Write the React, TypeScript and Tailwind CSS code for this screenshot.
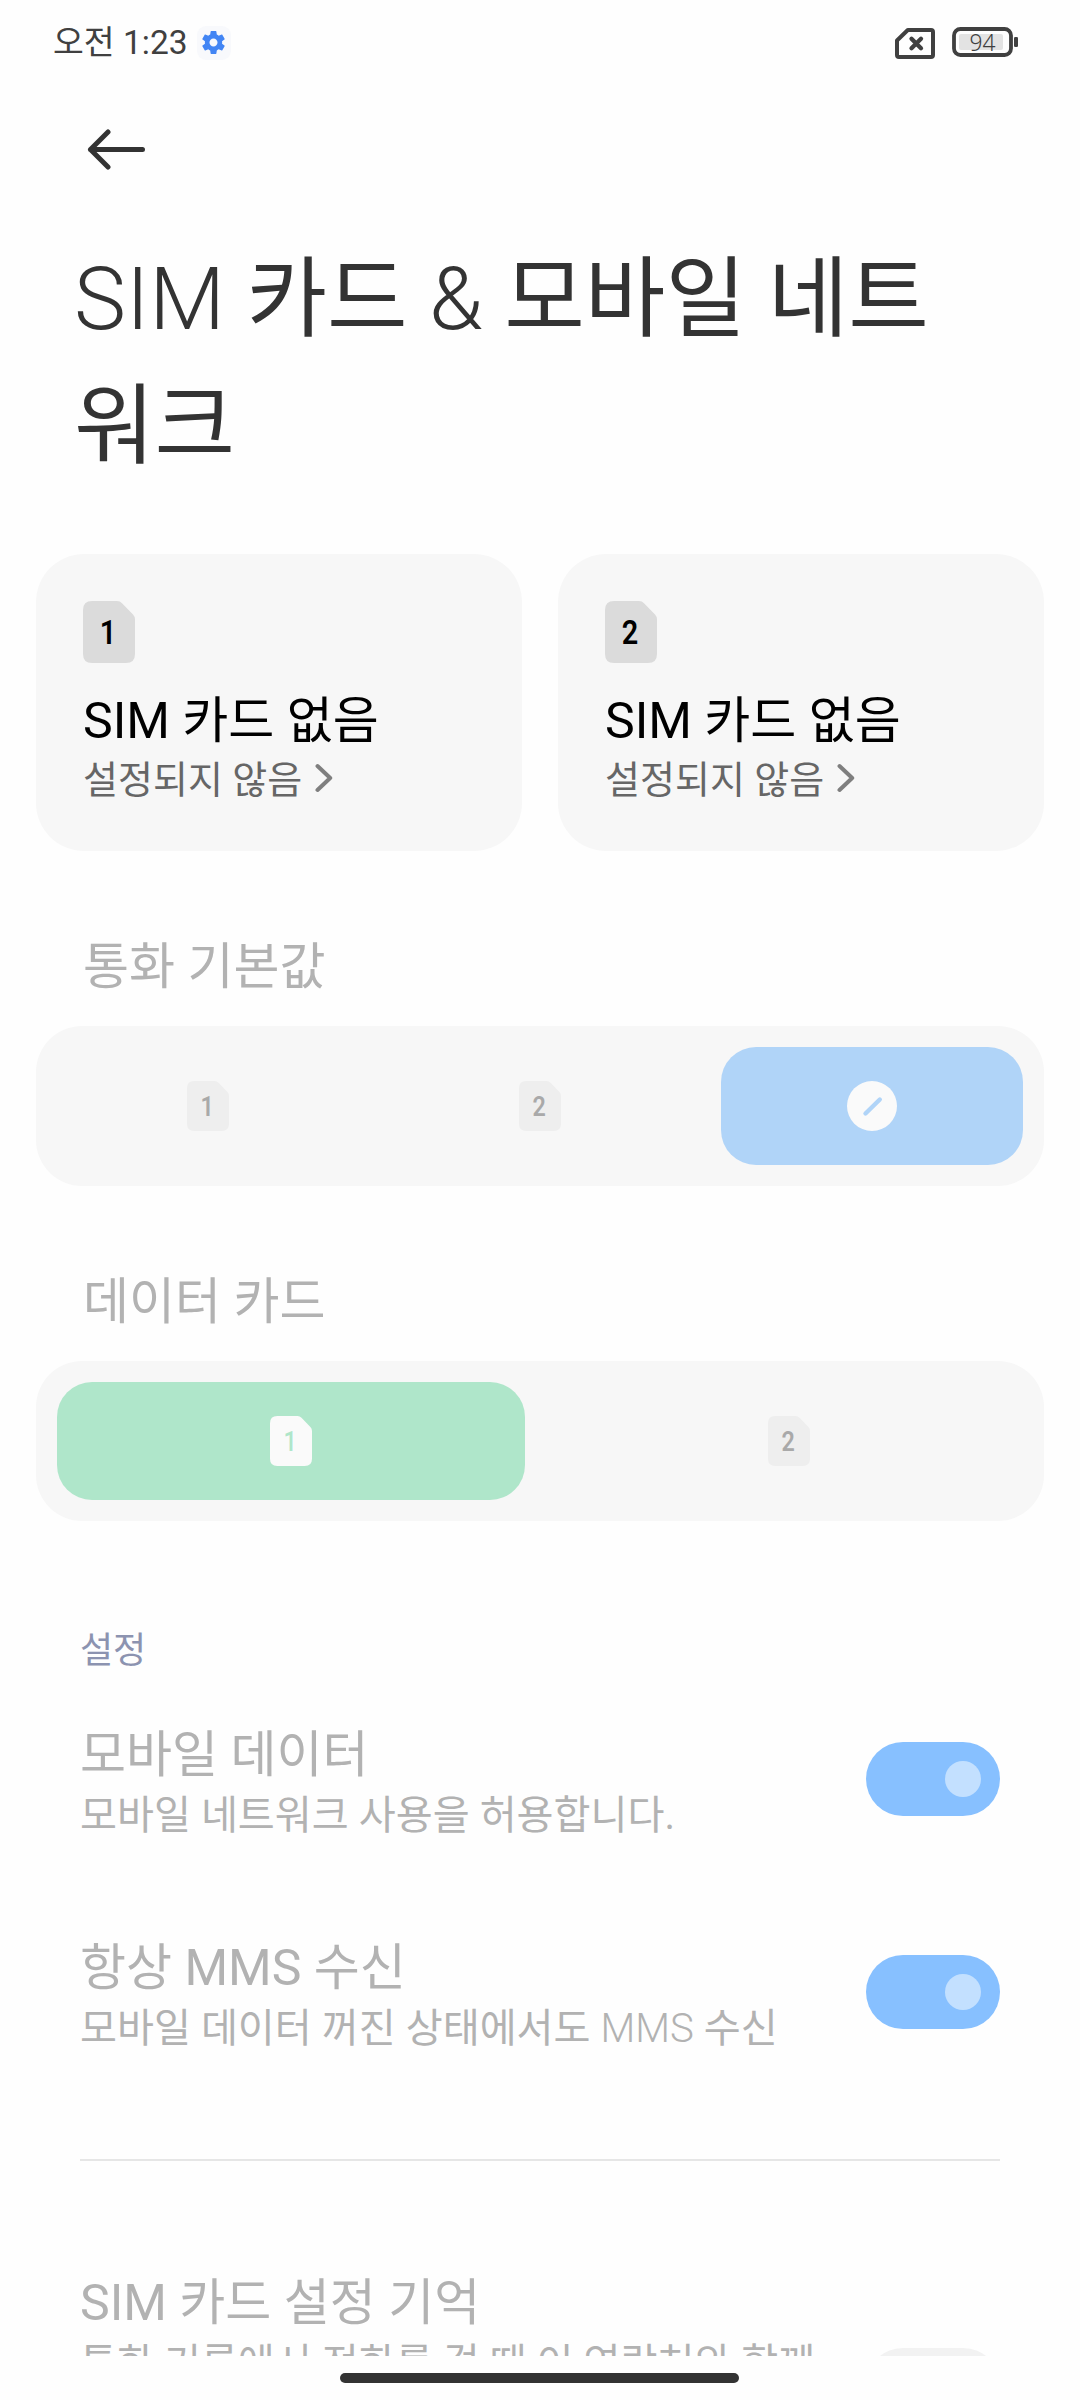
import type { ReactNode } from "react";

type SimIconProps = {
  slot: string;
  className: string;
  fill: string;
  ink: string;
  weight?: number;
};

function SimIcon({ slot, className, fill, ink, weight = 600 }: SimIconProps) {
  return (
    <svg viewBox="0 0 52 62" preserveAspectRatio="none" className={className}>
      <path
        d="M9 0H34Q37 0 39 2.200L50 13.500Q52 15.500 52 18.500V53Q52 62 43 62H9Q0 62 0 53V9Q0 0 9 0Z"
        fill={fill}
      />
      <text
        x="25"
        y="43"
        textAnchor="middle"
        fontSize="34"
        fontWeight={weight}
        fill={ink}
        textLength={16.5}
        lengthAdjust="spacingAndGlyphs"
      >
        {slot}
      </text>
    </svg>
  );
}

function SimCard({ slot }: { slot: string }) {
  return (
    <div className="h-[297px] flex-1 rounded-[48px] bg-[#f7f7f7] pt-[47px] pl-[47px]">
      <SimIcon slot={slot} className="h-[62px] w-[52px]" fill="#dbdbdb" ink="#000000" />
      <div className="mt-[25px] text-[50px] leading-[66px] text-black">SIM 카드 없음</div>
      <div className="flex items-start text-[38px] leading-[52px] text-[#666666]">
        <span>설정되지 않음</span>
        <svg viewBox="0 0 18 30" className="mt-[9px] ml-[13px] h-[30px] w-[18px]">
          <path
            d="M2.500 3L15.200 15L2.500 27"
            fill="none"
            stroke="#7f7f7f"
            strokeWidth="4"
            strokeLinecap="round"
            strokeLinejoin="round"
          />
        </svg>
      </div>
    </div>
  );
}

function SectionLabel({ children }: { children: ReactNode }) {
  return <div className="pl-[83px] text-[50px] leading-[66px] text-[#b2b2b2]">{children}</div>;
}

function Segmented({ children }: { children: ReactNode }) {
  return (
    <div className="mx-9 flex h-40 gap-[30px] rounded-[46px] bg-[#f7f7f7] p-[21px]">{children}</div>
  );
}

function Segment({ className = "", children }: { className?: string; children: ReactNode }) {
  return (
    <div className={`flex flex-1 items-center justify-center rounded-[35px] ${className}`}>
      {children}
    </div>
  );
}

function Toggle({ on, className }: { on: boolean; className: string }) {
  return (
    <div
      className={`flex h-[74px] w-[134px] shrink-0 items-center rounded-full px-[19px] ${
        on ? "justify-end bg-[#87c0ff]" : "justify-start bg-[#f2f2f2]"
      } ${className}`}
    >
      <div className={`size-9 rounded-full ${on ? "bg-[#c3e0ff]" : "bg-white"}`} />
    </div>
  );
}

type RowProps = { title: string; sub: ReactNode; on: boolean; toggleClass: string };

function SettingRow({ title, sub, on, toggleClass }: RowProps) {
  return (
    <div className="flex h-[120px] items-start justify-between text-[#b2b2b2]">
      <div className="whitespace-nowrap">
        <div className="text-[50px] leading-[66px]">{title}</div>
        <div className="text-[40.200px] leading-[56px]">{sub}</div>
      </div>
      <Toggle on={on} className={toggleClass} />
    </div>
  );
}

function StatusBar() {
  return (
    <header className="flex h-[86px] items-center pr-[61px] pl-[53px]">
      <span className="text-[33.500px] leading-[40px] text-[#404040]">오전 1:23</span>
      <span className="-mt-[1px] ml-[9px] flex size-[34px] items-center justify-center rounded-[9px] bg-[#f8f9fc]">
        <svg viewBox="2 2 20 20" className="size-[23px]">
          <path
            fill="#4285f4"
            d="M19.430 12.980c.04-.32.07-.64.07-.98s-.03-.66-.07-.98l2.110-1.650c.19-.15.24-.42.12-.64l-2-3.460c-.12-.22-.39-.3-.61-.22l-2.490 1c-.52-.4-1.080-.73-1.690-.98l-.38-2.650C14.460 2.180 14.250 2 14 2h-4c-.25 0-.46.18-.49.42l-.38 2.650c-.61.25-1.170.59-1.690.98l-2.490-1c-.23-.09-.49 0-.61.22l-2 3.460c-.13.22-.07.49.12.64l2.110 1.650c-.04.32-.07.65-.07.98s.03.66.07.98l-2.110 1.650c-.19.15-.24.42-.12.64l2 3.460c.12.22.39.3.61.22l2.490-1c.52.4 1.080.73 1.690.98l.38 2.650c.03.24.24.42.49.42h4c.25 0 .46-.18.49-.42l.38-2.650c.61-.25 1.170-.59 1.690-.98l2.490 1c.23.09.49 0 .61-.22l2-3.460c.12-.22.07-.49-.12-.64l-2.110-1.650zM12 15.500c-1.930 0-3.500-1.570-3.500-3.500s1.570-3.500 3.500-3.500 3.500 1.570 3.500 3.500-1.570 3.500-3.500 3.500z"
          />
        </svg>
      </span>
      <svg viewBox="0 0 40 31" className="ml-auto h-[31px] w-[40px]">
        <path
          d="M12.800 2H36Q38 2 38 4V27Q38 29 36 29H4Q2 29 2 27V12.500Z"
          fill="none"
          stroke="#404040"
          strokeWidth="4"
          strokeLinejoin="round"
        />
        <path
          d="M16.500 10.700L26 20.200M26 10.700L16.500 20.200"
          stroke="#404040"
          strokeWidth="4.300"
          strokeLinecap="round"
        />
      </svg>
      <svg viewBox="0 0 67 30" className="-mt-[2px] ml-[17px] h-[30px] w-[67px] overflow-visible">
        <rect x="2" y="2" width="57" height="26" rx="6.500" fill="none" stroke="#404040" strokeWidth="3.800" />
        <rect x="7" y="7" width="44" height="16" rx="2" fill="#e3e3e3" />
        <rect x="62" y="10" width="4" height="10" rx="1.300" fill="#404040" />
        <text
          x="30.500"
          y="24"
          textAnchor="middle"
          fontSize="24"
          fontWeight={300}
          fontFamily="'Noto Sans', sans-serif"
          fill="#404040"
          textLength="26"
          lengthAdjust="spacingAndGlyphs"
        >
          94
        </text>
      </svg>
    </header>
  );
}

export default function App() {
  return (
    <div className="flex h-[2400px] w-[1080px] flex-col bg-[#fefefe] font-[Roboto,'Noto_Sans_CJK_KR',sans-serif]">
      <main className="h-[2356px] overflow-hidden">
        <StatusBar />

        <nav className="h-[150px] pt-[43px] pl-[87px]">
          <svg viewBox="0 0 60 41" className="h-[41px] w-[60px]">
            <path
              d="M21 3L3.500 20.500L21 38M3.500 20.500H55.500"
              fill="none"
              stroke="#333333"
              strokeWidth="5"
              strokeLinecap="round"
              strokeLinejoin="round"
            />
          </svg>
        </nav>

        <h1 className="h-[318px] pl-[74px] text-[87.600px] leading-[127px] font-light text-[#333333]">
          SIM <span className="font-normal">카드</span> &amp;{" "}
          <span className="font-normal">모바일 네트</span>
          <br />
          <span className="font-normal">워크</span>
        </h1>

        <section className="flex gap-9 px-9">
          <SimCard slot="1" />
          <SimCard slot="2" />
        </section>

        <section className="pt-[83px]">
          <SectionLabel>통화 기본값</SectionLabel>
          <div className="h-[26px]" />
          <Segmented>
            <Segment>
              <SimIcon slot="1" className="h-[50px] w-[42px]" fill="#eeeeee" ink="#a9a9a9" />
            </Segment>
            <Segment>
              <SimIcon slot="2" className="h-[50px] w-[42px]" fill="#eeeeee" ink="#a9a9a9" />
            </Segment>
            <Segment className="bg-[#b0d4f8]">
              <svg viewBox="0 0 50 50" className="size-[50px]">
                <circle cx="25" cy="25" r="25" fill="#fafafa" />
                <path d="M18.500 32.500L32.800 18.500" stroke="#b0d4f8" strokeWidth="4.400" strokeLinecap="round" />
              </svg>
            </Segment>
          </Segmented>
        </section>

        <section className="pt-[83px]">
          <SectionLabel>데이터 카드</SectionLabel>
          <div className="h-[26px]" />
          <Segmented>
            <Segment className="bg-[#afe6ca]">
              <SimIcon slot="1" className="h-[50px] w-[42px]" fill="#fafafa" ink="#afe6ca" weight={500} />
            </Segment>
            <Segment>
              <SimIcon slot="2" className="h-[50px] w-[42px]" fill="#eeeeee" ink="#a9a9a9" />
            </Segment>
          </Segmented>
        </section>

        <section className="px-20 pt-[105px]">
          <h2 className="text-[36px] leading-[50px] text-[#8c93b0]">설정</h2>
          <div className="mt-[46px] flex flex-col gap-[93px]">
            <SettingRow
              title="모바일 데이터"
              sub="모바일 네트워크 사용을 허용합니다."
              on
              toggleClass="mt-[20px]"
            />
            <SettingRow
              title="항상 MMS 수신"
              sub={
                <>
                  모바일 데이터 꺼진 상태에서도 <span className="font-light">MMS</span> 수신
                </>
              }
              on
              toggleClass="mt-[20px]"
            />
          </div>
          <hr className="mt-[104px] border-t-2 border-[#e6e6e6]" />
          <div className="pt-[109px]">
            <SettingRow
              title="SIM 카드 설정 기억"
              sub="통화 기록에서 전화를 걸 때 이 연락처와 함께"
              on={false}
              toggleClass="mt-[78px]"
            />
          </div>
        </section>
      </main>
      <footer className="flex h-11 pt-[17px] pl-[340px]">
        <div className="h-[10px] w-[399px] rounded-full bg-[#333333]" />
      </footer>
    </div>
  );
}
